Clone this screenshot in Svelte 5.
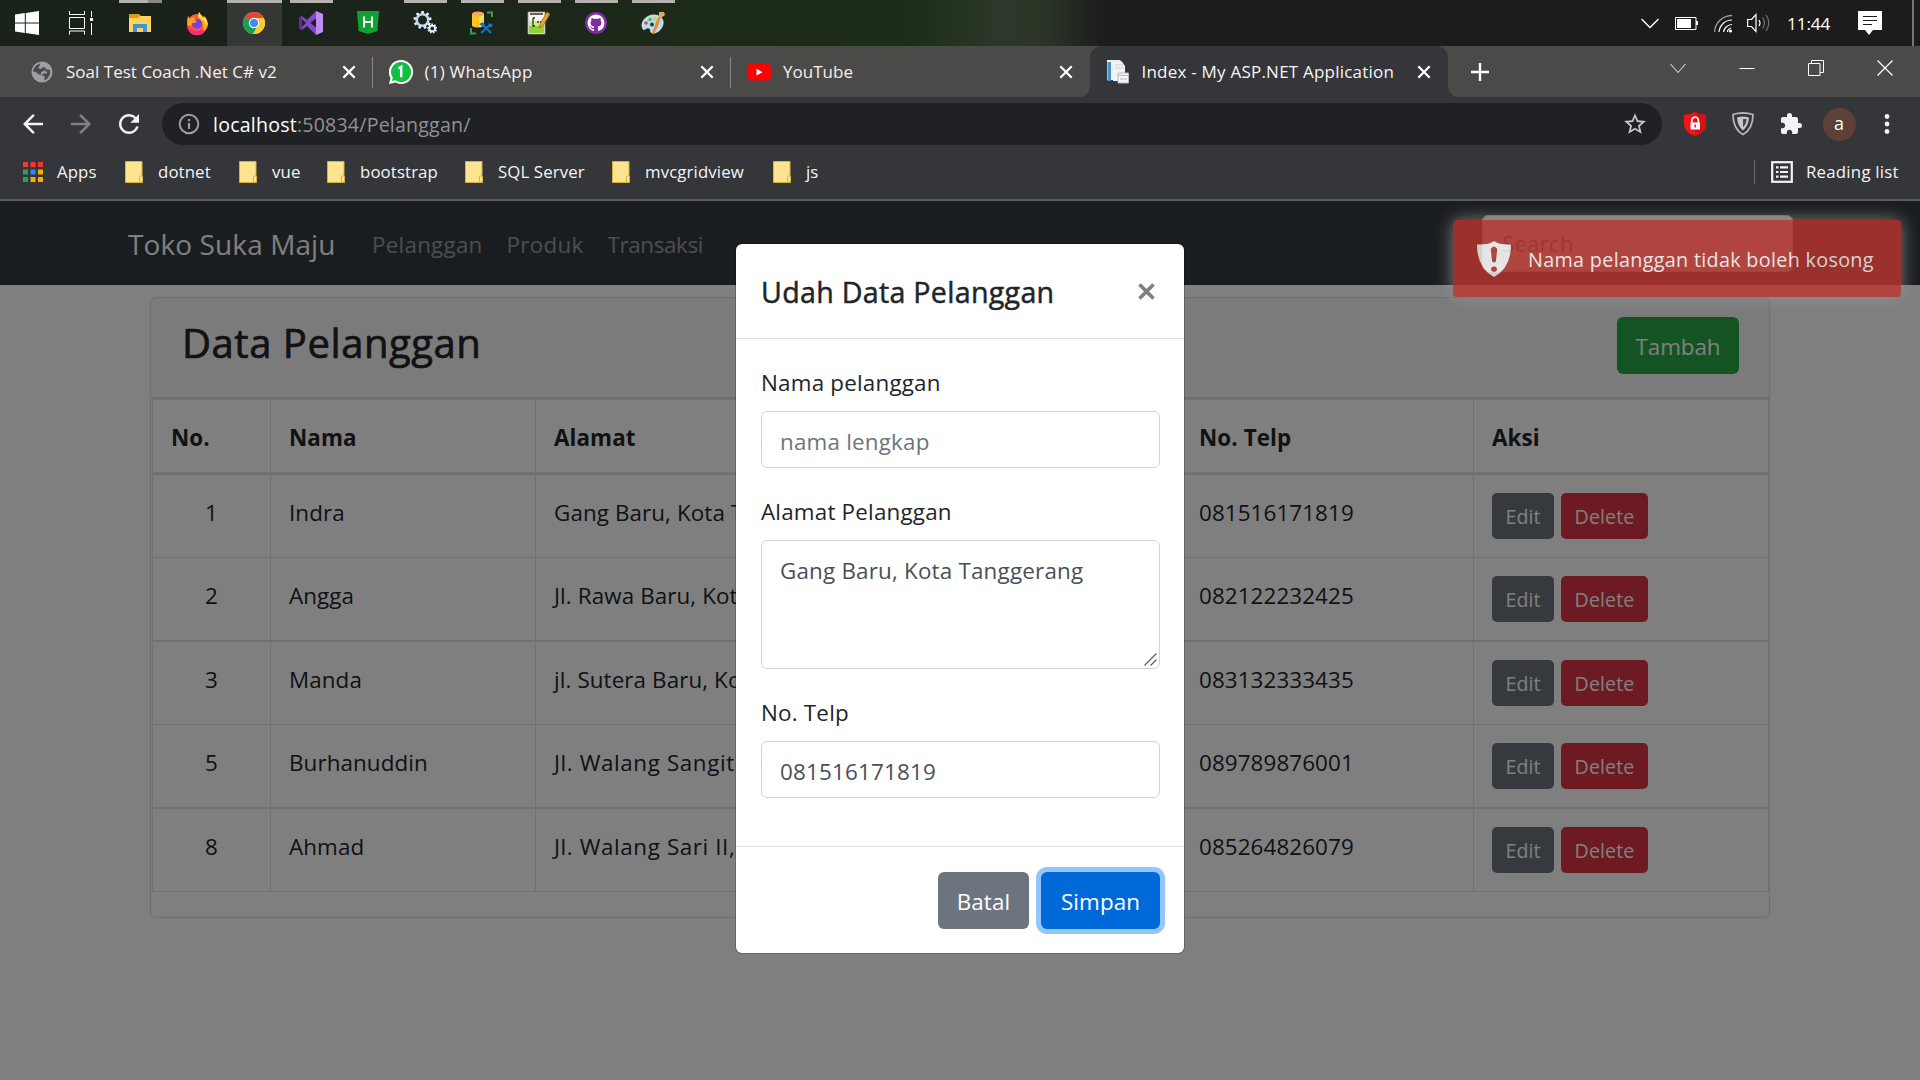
<script>
  const tabs = [
    { icon: 'globe', title: 'Soal Test Coach .Net C# v2' },
    { icon: 'whatsapp', title: '(1) WhatsApp' },
    { icon: 'youtube', title: 'YouTube' },
    { icon: 'page', title: 'Index - My ASP.NET Application', active: true }
  ];

  const bookmarks = ['dotnet', 'vue', 'bootstrap', 'SQL Server', 'mvcgridview', 'js'];

  const apps = [
    { icon: 'explorer', running: true, stacked: true },
    { icon: 'firefox' },
    { icon: 'chrome', running: true, focused: true },
    { icon: 'vs', running: true },
    { icon: 'heidi' },
    { icon: 'gears', running: true },
    { icon: 'sql', running: true },
    { icon: 'notepad', running: true },
    { icon: 'github', running: true },
    { icon: 'paint', running: true }
  ];

  const customers = [
    { id: 1, name: 'Indra', address: 'Gang Baru, Kota Tanggerang', phone: '081516171819' },
    { id: 2, name: 'Angga', address: 'Jl. Rawa Baru, Kota Tanggerang', phone: '082122232425' },
    { id: 3, name: 'Manda', address: 'jl. Sutera Baru, Kota Tanggerang', phone: '083132333435' },
    { id: 5, name: 'Burhanuddin', address: 'Jl. Walang Sangit', phone: '089789876001' },
    { id: 8, name: 'Ahmad', address: 'Jl. Walang Sari II, Jakarta', phone: '085264826079' }
  ];

  const appColors = ['#f33', '#f33', '#f33', '#2ba24c', '#2c8cf4', '#f9ab00', '#2ba24c', '#f9ab00', '#f9ab00'];
  const teeth = [0, 40, 80, 120, 160, 200, 240, 280, 320];
</script>

{#snippet taskIcon(name)}
  <svg class="task-svg" viewBox="0 0 24 24">
    {#if name === 'explorer'}
      <path d="M1 3h10l2 2v3H1z" fill="#dd9a0b" />
      <path d="M1 7h9l2-2h11v16H1z" fill="#ffd35c" />
      <path d="M5 21v-7q0-1 1-1h12q1 0 1 1v7h-4v-4h-6v4z" fill="#3a95de" />
    {:else if name === 'firefox'}
      <circle cx="12" cy="13" r="10" fill="#ff5a36" />
      <path d="M2 14a10 10 0 0 0 20 1l-4 3-6 2-6-2z" fill="#f5306f" />
      <path d="M3 5l2 3 3-2 4 3-2 4-7 2-1-5zM13 6l1-5 4 6 1-2q4 4 4 9-1 5-5 6 1-5-1-9z" fill="#ffa21f" />
      <path d="M14 1l4 6 2-1q3 4 2 9l-3-5-6-4z" fill="#ffe03d" />
      <circle cx="12" cy="13" r="5" fill="#7a3fe0" />
      <path d="M5 9l5 0 2 2-3 1-3 0z" fill="#ff9b1c" />
    {:else if name === 'chrome'}
      <circle cx="12" cy="12" r="11" fill="#fbc935" />
      <path d="M12 12L2.500 6.500A11 11 0 0 1 21.500 6.500z" fill="#dc4a3e" />
      <path d="M12 12L2.500 6.500A11 11 0 0 0 11 23l5-9z" fill="#16a05a" />
      <path d="M12 7h9.800A11 11 0 0 1 11 23l5.300-8.500z" fill="#fbc935" />
      <circle cx="12" cy="12" r="5.200" fill="#fff" />
      <circle cx="12" cy="12" r="4.100" fill="#4688f4" />
    {:else if name === 'vs'}
      <path d="M3 8.500v7l4-3.500zM0 6.500L3 5l5 4 9-9v7.500L11.500 12l5.500 4.500V24l-9-9-5 4-3-1.500z" fill="#8548c9" />
      <path d="M0 6.500L3 5v3.500l0 7V19l-3-1.500z" fill="#68299a" />
      <path d="M3 8.500v7l3.500-3.500z" fill="#1b231a" />
      <path d="M17 0l7 3v18l-7 3z" fill="#c08cf2" />
    {:else if name === 'heidi'}
      <path d="M1 0h22l-1.500 20L12 23 2.500 20z" fill="#12a035" />
      <path d="M8 5.500v11M16 5.500v11M8 11h8" stroke="#fff" stroke-width="1.900" fill="none" />
    {:else if name === 'gears'}
      {#each teeth as a}
        <rect x="8.300" y="0" width="2.600" height="4" fill="#e8f3fc" transform="rotate({a} 9.500 9)" />
        <rect x="18.300" y="12.500" width="1.700" height="3" fill="#d6e8f8" transform="rotate({a} 19.200 17.500)" />
      {/each}
      <circle cx="9.500" cy="9" r="5.800" fill="none" stroke="#bcd9f2" stroke-width="2.600" />
      <circle cx="19.200" cy="17.500" r="2.900" fill="none" stroke="#e6f1fb" stroke-width="1.800" />
    {:else if name === 'sql'}
      <path d="M2 3v12q5 3 12 0V3z" fill="#fcc61c" />
      <path d="M9 3h5v12l-5 1z" fill="#ffdb5c" />
      <ellipse cx="8" cy="3" rx="6" ry="2.500" fill="#f5a95b" />
      <path d="M17 1.500h5V6M1 17v5.500h5" fill="none" stroke="#3f9b45" stroke-width="2" />
      <path d="M11 22l10-9M12 13l9 9" stroke="#1573c8" stroke-width="2.200" />
      <path d="M9 13l4-2 2 3-2 2zM19 11l1 3 3-1-1 3h-4z" fill="#1573c8" />
    {:else if name === 'notepad'}
      <path d="M1 1h17v22H1z" fill="#f5f8ec" stroke="#999" stroke-width="0.800" />
      <path d="M2 12h15v10H2z" fill="#8fd52e" />
      <path d="M2 10h15v5H2z" fill="#c8ec86" />
      <path d="M6 7v8h2M6 7h2M10 11h2M13 11h2M3 3h13" stroke="#333" stroke-width="1.300" fill="none" />
      <path d="M12 17l1-4 7-12 3 2-7 12z" fill="#f3a52a" stroke="#83612d" stroke-width="0.700" />
    {:else if name === 'github'}
      <circle cx="12" cy="12" r="11" fill="#822ba5" />
      <g transform="translate(3.600 3.600) scale(1.050)">
        <path fill="#fff" d="M8 0C3.580 0 0 3.580 0 8c0 3.540 2.290 6.530 5.470 7.590.4.070.55-.17.55-.38 0-.19-.01-.82-.01-1.490-2.010.37-2.530-.49-2.690-.94-.09-.23-.48-.94-.82-1.130-.28-.15-.68-.52-.01-.53.63-.01 1.080.58 1.230.82.72 1.210 1.870.87 2.330.66.07-.52.28-.87.51-1.070-1.780-.2-3.640-.89-3.640-3.950 0-.87.31-1.590.82-2.150-.08-.2-.36-1.020.08-2.120 0 0 .67-.21 2.200.82.64-.18 1.320-.27 2-.27.68 0 1.360.09 2 .27 1.530-1.040 2.200-.82 2.200-.82.44 1.100.16 1.920.08 2.120.51.56.82 1.270.82 2.150 0 3.070-1.870 3.750-3.650 3.950.29.25.54.73.54 1.480 0 1.070-.01 1.930-.01 2.200 0 .21.15.46.55.38A8 8 0 0 0 16 8c0-4.420-3.580-8-8-8z" />
      </g>
    {:else if name === 'paint'}
      <path d="M1 15C1 8 7 4 13 4s10 4 9 9-5 9-10 9c-4 0-1-4-4-5s-4 3-6 1z" fill="#b5dcf2" stroke="#e5f4fc" stroke-width="0.800" />
      <circle cx="5" cy="12" r="1.800" fill="#e0483a" />
      <circle cx="9" cy="8.500" r="1.800" fill="#5cb83c" />
      <circle cx="14" cy="7.500" r="1.800" fill="#f1c62c" />
      <circle cx="11" cy="13.500" r="1.900" fill="#22384a" />
      <path d="M11 22l4-11 3-6 2 1-3 9-4 8z" fill="#ee8c2d" />
      <path d="M18 1l5 0 1 3-4 3-2-1z" fill="#d9ad79" />
    {/if}
  </svg>
{/snippet}

{#snippet favicon(name)}
  <svg class="favicon" viewBox="0 0 24 24">
    {#if name === 'globe'}
      <circle cx="12" cy="12" r="10.500" fill="#9aa0a6" />
      <path d="M10 3.500q-6 2-7 8l3 .5 2 2 3 1v-3l3-1 2-3-3-1-2 2-3-1 2-3zM15 9l5 1q1 6-4 9.500l-2 1 1-4-3-1 1-2h4v-2h-2z" fill="#4c4a48" />
    {:else if name === 'whatsapp'}
      <path d="M12 0A12 12 0 1 1 6.500 22.600L0 24l1.500-6A12 12 0 0 1 12 0z" fill="#fff" />
      <path d="M12 2A10 10 0 1 1 6.500 20.300L3 21l.8-3.400A10 10 0 0 1 12 2z" fill="#11bf43" />
      <path d="M9.500 8.500l2.700-1.700v10.500" stroke="#fff" stroke-width="2.400" fill="none" />
    {:else if name === 'youtube'}
      <rect x="0" y="4" width="24" height="16.500" rx="4" fill="#f00" />
      <path d="M9.500 8.800v6.800l6-3.400z" fill="#fff" />
    {:else}
      <path d="M1 0h13l3 3v17H1z" fill="#eceff1" />
      <path d="M1.500 2h3.500v19H1.500z" fill="#4a90c8" />
      <path d="M7 2h9l3 4v15H7z" fill="#f1f3f4" />
      <path d="M9 5h8M9 8h9" stroke="#d3d8dc" stroke-width="1.200" />
      <path d="M12 13h10.500v10H12z" fill="#f5f6f7" stroke="#b5bbc0" stroke-width="1" />
      <path d="M12 15.500h10M14 19h7" stroke="#b5bbc0" stroke-width="1" />
    {/if}
  </svg>
{/snippet}

<div class="screen">
  <header class="taskbar">
    <div class="system-cell">
      <svg class="task-svg" viewBox="0 0 24 24">
        <path d="M0 3.400L9.800 2v9.500H0zM10.800 1.900L24 0v11.500H10.800zM0 12.500h9.800V22L0 20.600zM10.800 12.500H24V24l-13.200-1.900z" fill="#fff" />
      </svg>
    </div>
    <div class="system-cell">
      <svg class="task-svg" viewBox="0 0 24 24" fill="none" stroke="#fff">
        <path d="M.5 0v3.500h15V0M.5 6.500h15v11H.5zM.5 23.500v-3.500h15v3.500M22.500 0v6M22.500 12v12" />
        <rect x="21" y="7" width="3" height="3" fill="#fff" stroke="none" />
      </svg>
    </div>
    <nav class="apps">
      {#each apps as app}
        <div class="app" class:running={app.running} class:focused={app.focused} class:stacked={app.stacked}>
          {@render taskIcon(app.icon)}
        </div>
      {/each}
    </nav>
    <div class="tray">
      <svg width="18" height="24" viewBox="0 0 18 24"><path d="M.5 8L9 16.500 17.500 8" fill="none" stroke="#fff" stroke-width="1.400" /></svg>
      <svg class="battery" width="23" height="24" viewBox="0 0 23 24">
        <path d="M.5 6.500h20.500v12H.5z" fill="none" stroke="#fff" /><path d="M2 8h14v9H2zM21 10h2v4h-2z" fill="#fff" />
      </svg>
      <svg class="wifi" width="19" height="24" viewBox="0 0 19 24" fill="none" stroke="#fff" stroke-width="1.200">
        <path d="M.6 21A17 17 0 0 1 18 4.600" stroke="#aaa" /><path d="M5 21A13 13 0 0 1 18 9M9.500 21A9 9 0 0 1 18 13.500M13.500 21q0-3 3.500-4" />
        <circle cx="16.500" cy="20" r="1.600" fill="#fff" stroke="none" />
      </svg>
      <svg class="speaker" width="23" height="24" viewBox="0 0 23 24" fill="none" stroke="#fff" stroke-width="1.200">
        <path d="M.6 8.500h3.900L9 3.500v17l-4.500-5H.6z" /><path d="M12 9q2 3 0 6" />
        <path d="M15.500 6.500q4 5.500 0 11M19 4q5.500 8 0 16" stroke="#777" />
      </svg>
      <time>11:44</time>
      <svg class="notice" width="24" height="24" viewBox="0 0 24 24">
        <path d="M0 0h24v19h-9l-4 5-4-5H0z" fill="#fff" /><path d="M5 5.500h14M5 9.500h14M5 13.500h9" stroke="#1c1c1c" stroke-width="1.200" />
      </svg>
    </div>
    <div class="show-desktop"></div>
  </header>

  <div class="tabstrip">
    {#each tabs as tab}
      <div class="tab" class:active={tab.active}>
        {@render favicon(tab.icon)}
        <span class="tab-title">{tab.title}</span>
        <svg width="14" height="14" viewBox="0 0 14 14"><path d="M1.300 1.300l11.400 11.400M12.700 1.300L1.300 12.700" stroke="#fff" stroke-width="2.300" /></svg>
      </div>
    {/each}
    <svg class="new-tab" width="18" height="18" viewBox="0 0 18 18"><path d="M9 0v18M0 9h18" stroke="#fff" stroke-width="2.400" /></svg>
    <div class="window-controls">
      <svg width="16" height="16" viewBox="0 0 16 16"><path d="M.5 4L8 12.500 15.500 4" fill="none" stroke="#d5d5d5" stroke-width="1.100" /></svg>
      <svg width="16" height="16" viewBox="0 0 16 16"><path d="M.5 8.500h15" stroke="#fff" /></svg>
      <svg width="16" height="16" viewBox="0 0 16 16"><path d="M.5 3.500h11.500v12H.5zM3.500 3.500v-3h12v12h-3.500" fill="none" stroke="#fff" /></svg>
      <svg width="16" height="16" viewBox="0 0 16 16"><path d="M.5.5l15 15M15.500.5l-15 15" stroke="#fff" stroke-width="1.200" /></svg>
    </div>
  </div>

  <div class="toolbar">
    <svg class="nav-icon" viewBox="0 0 24 24"><path fill="#f1f3f4" d="M20 11H7.830l5.590-5.590L12 4l-8 8 8 8 1.410-1.410L7.830 13H20v-2z" /></svg>
    <svg class="nav-icon" viewBox="0 0 24 24"><path fill="#808185" d="M4 11h12.170l-5.590-5.590L12 4l8 8-8 8-1.410-1.410L16.170 13H4v-2z" /></svg>
    <svg class="nav-icon" viewBox="0 0 24 24"><path fill="#f1f3f4" d="M17.650 6.350A7.958 7.958 0 0 0 12 4c-4.420 0-7.990 3.580-7.990 8s3.570 8 7.990 8c3.730 0 6.840-2.550 7.730-6h-2.080A5.990 5.990 0 0 1 12 18c-3.310 0-6-2.690-6-6s2.690-6 6-6c1.660 0 3.140.69 4.220 1.780L13 11h7V4l-2.350 2.350z" /></svg>
    <div class="omnibox">
      <svg width="22" height="22" viewBox="0 0 22 22" fill="none" stroke="#9aa0a6" stroke-width="2"><circle cx="11" cy="11" r="9.300" /><path d="M11 10v6M11 6v2.200" stroke-width="2.200" /></svg>
      <span class="url"><b>localhost</b>:50834/Pelanggan/</span>
      <svg class="star" width="26" height="26" viewBox="0 0 24 24"><path fill="#c6c8ca" d="M22 9.240l-7.190-.62L12 2 9.190 8.630 2 9.240l5.460 4.730L5.820 21 12 17.270 18.180 21l-1.630-7.030L22 9.240zM12 15.400l-3.760 2.270 1-4.280-3.320-2.880 4.380-.38L12 6.100l1.710 4.040 4.380.38-3.320 2.880 1 4.280L12 15.400z" /></svg>
    </div>
    <div class="extensions">
      <svg width="24" height="24" viewBox="0 0 24 24">
        <path d="M12 0q5 3 11 3v10q-1 8-11 11Q2 21 1 13V3q6 0 11-3z" fill="#f5131a" /><path d="M12 0q5 3 11 3v10q-1 8-11 11z" fill="#d90f12" />
        <path d="M8.800 11V8.500a3.300 3.300 0 0 1 6.600 0V11" fill="none" stroke="#fff" stroke-width="1.700" /><rect x="7.500" y="10.500" width="9.500" height="7" fill="#fff" /><path d="M12.200 12.500v3" stroke="#e01115" stroke-width="1.500" />
      </svg>
      <svg width="24" height="24" viewBox="0 0 24 24">
        <path d="M2 2.500Q12-.5 22 2.500 22 17 12 22.500 2 17 2 2.500z" fill="none" stroke="#b5b7ba" stroke-width="1.800" />
        <path d="M6 5.500q6-2 12 0Q17.500 14 12 18.500 6.500 14 6 5.500z" fill="#c5c7c9" /><path d="M12 7h3.500q0 5-3.500 8z" fill="#45464a" />
      </svg>
      <svg width="24" height="24" viewBox="0 0 24 24"><path fill="#f1f3f4" d="M20.500 11H19V7c0-1.100-.9-2-2-2h-4V3.500a2.500 2.500 0 0 0-5 0V5H4c-1.100 0-1.990.9-1.990 2v3.800H3.500c1.490 0 2.700 1.210 2.700 2.700s-1.210 2.700-2.700 2.700H2V20c0 1.100.9 2 2 2h3.800v-1.500c0-1.490 1.210-2.700 2.700-2.700s2.700 1.210 2.700 2.700V22H17c1.100 0 2-.9 2-2v-4h1.500a2.500 2.500 0 0 0 0-5z" /></svg>
      <span class="avatar">a</span>
      <svg width="24" height="24" viewBox="0 0 24 24" fill="#f1f3f4"><circle cx="12" cy="4.500" r="2.400" /><circle cx="12" cy="12" r="2.400" /><circle cx="12" cy="19.500" r="2.400" /></svg>
    </div>
  </div>

  <div class="bookmarks">
    <div class="bookmark apps-link">
      <svg width="20" height="20" viewBox="0 0 20 20">
        {#each appColors as color, i}
          <rect x={(i % 3) * 7.5} y={Math.floor(i / 3) * 7.5} width="5" height="5" fill={color} />
        {/each}
      </svg>
      Apps
    </div>
    {#each bookmarks as name}
      <div class="bookmark">
        <svg width="18" height="22" viewBox="0 0 18 22">
          <path d="M.5.5h16.500V15l.5 1v5.500H.5z" fill="#ffe38f" stroke="#d9b23c" /><path d="M14.500 21v-5.500q1.500-1.500 3 0V21z" fill="#ffe9a8" stroke="#d9b23c" />
        </svg>
        {name}
      </div>
    {/each}
    <div class="reading">
      <svg width="22" height="22" viewBox="0 0 22 22" fill="none" stroke="#f1f3f4"><rect x="1.200" y="1.200" width="19.600" height="19.600" stroke-width="2.200" /><path d="M5 6.300h2.500M5 11h2.500M5 15.700h2.500M9 6.300h8M9 11h8M9 15.700h8" stroke-width="2.200" /></svg>
      Reading list
    </div>
  </div>

  <main class="page">
    <nav class="navbar">
      <span class="brand">Toko Suka Maju</span>
      <span class="link">Pelanggan</span>
      <span class="link">Produk</span>
      <span class="link">Transaksi</span>
      <input class="search" type="text" placeholder="Search" />
    </nav>

    <section class="card">
      <div class="card-header">
        <h2>Data Pelanggan</h2>
        <button class="btn success">Tambah</button>
      </div>
      <div class="table">
        <div class="row head">
          <div>No.</div><div>Nama</div><div>Alamat</div><div>No. Telp</div><div>Aksi</div>
        </div>
        {#each customers as c}
          <div class="row">
            <div class="number">{c.id}</div>
            <div>{c.name}</div>
            <div class="address">{c.address}</div>
            <div>{c.phone}</div>
            <div class="actions">
              <button class="btn small secondary edit">Edit</button>
              <button class="btn small danger delete">Delete</button>
            </div>
          </div>
        {/each}
      </div>
    </section>

    <div class="backdrop">
      <div class="modal">
        <div class="modal-header">
          <h5>Udah Data Pelanggan</h5>
          <svg width="17" height="17" viewBox="0 0 17 17"><path d="M1.500 1.500l14 14M15.500 1.500l-14 14" stroke="#7f7f7f" stroke-width="3.700" /></svg>
        </div>
        <div class="modal-body">
          <label for="nama">Nama pelanggan</label>
          <input id="nama" class="field" type="text" placeholder="nama lengkap" />
          <label for="alamat">Alamat Pelanggan</label>
          <div class="area">
            <textarea id="alamat" class="field">Gang Baru, Kota Tanggerang</textarea>
            <svg class="grip" width="13" height="13" viewBox="0 0 13 13"><path d="M.5 12.500l12-12M6.500 12.500l6-6" stroke="#555" stroke-width="1.100" /></svg>
          </div>
          <label for="telp">No. Telp</label>
          <input id="telp" class="field" type="text" value="081516171819" />
        </div>
        <div class="modal-footer">
          <button class="btn secondary cancel">Batal</button>
          <button class="btn primary">Simpan</button>
        </div>
      </div>
    </div>

    <div class="toast">
      <svg width="34" height="36" viewBox="0 0 34 36">
        <path fill-rule="evenodd" fill="#fff" d="M17 0q5 4 17 3.500Q34 27 17 36 0 27 0 3.500 12 4 17 0zM13.800 8l1.200 12q2 3 4 0l1.200-12q-3.200-5-6.400 0zM17 25.500a3 2.600 0 1 0 .01 0z" />
      </svg>
      <span>Nama pelanggan tidak boleh kosong</span>
    </div>
  </main>
</div>

<style>
  :global(body) { margin: 0; }
  .screen, .screen * { box-sizing: border-box; }
  .screen {
    width: 1920px; height: 1080px; overflow: hidden; display: flex; flex-direction: column;
    font-family: "Open Sans", "Noto Sans", sans-serif; font-size: 22.4px; line-height: 36px; color: #212529;
  }
  svg { display: block; flex: none; }
  button, input, textarea { font: inherit; letter-spacing: inherit; word-spacing: inherit; margin: 0; }

  .taskbar {
    height: 46px; flex: none; display: flex; align-items: center; color: #fff;
    background: linear-gradient(90deg, #19221b 0, #1b231a 400px, #1c2a18 680px, #1b2c19 900px, #2c3829 1000px, #2b3527 1045px, #1c1e1c 1100px, #1c1c1c 1200px);
  }
  .task-svg { width: 24px; height: 24px; }
  .system-cell { width: 54px; display: flex; justify-content: center; }
  .apps { display: flex; gap: 2px; height: 46px; margin-left: 5px; }
  .app { width: 55px; height: 46px; display: flex; flex-direction: column; align-items: center; padding: 11px 2px 0 0; position: relative; }
  .app.running::before { content: ""; position: absolute; top: 0; left: 6px; right: 6px; height: 3px; background: #b5b1af; }
  .app.stacked::before { background: linear-gradient(90deg, #b5b1af 29px, #8b8886 29px); }
  .app.focused { background: #343733; }
  .app.focused::before { left: 0; right: 0; }
  .tray { margin-left: auto; display: flex; align-items: center; font-size: 17.2px; line-height: 24px; }
  .battery { margin-left: 16px; }
  .wifi { margin-left: 16px; }
  .speaker { margin-left: 14px; }
  time { margin-left: 17px; width: 43px; letter-spacing: -0.1px; white-space: nowrap; padding-top: 1px; }
  .notice { margin-left: 28px; }
  .show-desktop { width: 2px; height: 46px; background: #777; margin: 0 6px 0 30px; }

  .tabstrip { height: 51px; flex: none; background: #4c4a48; display: flex; align-items: center; padding-left: 14px; color: #f1f1f1; font-size: 17px; }
  .tab { width: 358.5px; height: 51px; display: flex; align-items: center; padding: 0 17px 0 16px; position: relative; }
  .tab:nth-child(-n + 2)::after { content: ""; position: absolute; right: 0; top: 11px; width: 1px; height: 31px; background: #8b8988; }
  .tab.active { background: #35363a; border-radius: 12px 12px 0 0; color: #f5f5f5; }
  .tab.active::before, .tab.active::after { content: ""; position: absolute; bottom: 0; width: 10px; height: 10px; }
  .tab.active::before { left: -10px; background: radial-gradient(circle at 0 0, transparent 9.5px, #35363a 10px); }
  .tab.active::after { right: -10px; background: radial-gradient(circle at 100% 0, transparent 9.5px, #35363a 10px); }
  .favicon { width: 24px; height: 24px; margin-right: 12px; }
  .tab-title { flex: 1; white-space: nowrap; letter-spacing: 0.02px; }
  .tab:nth-child(2) .tab-title, .active .tab-title { letter-spacing: 0.22px; }
  .new-tab { margin-left: 23px; }
  .window-controls { margin-left: auto; display: flex; gap: 53px; padding: 0 27px 8px 0; }

  .toolbar { height: 54px; flex: none; background: #35363a; display: flex; align-items: center; gap: 18px; padding-left: 18px; }
  .nav-icon { width: 30px; height: 30px; }
  .omnibox { width: 1500px; height: 42px; border-radius: 21px; background: #202124; display: flex; align-items: center; padding: 0 14px 0 16px; }
  .url { margin-left: 13px; font-size: 19.6px; letter-spacing: 0.2px; color: #8f9195; padding-top: 1px; }
  .url b { font-weight: 400; color: #fff; }
  .star { margin-left: auto; }
  .extensions { display: grid; grid-template-columns: repeat(5, 48px); justify-items: center; align-items: center; margin-left: -9px; }
  .avatar { width: 33px; height: 33px; border-radius: 50%; background: #5d4037; color: #fff; font-size: 18px; line-height: 31px; text-align: center; }

  .bookmarks {
    height: 50px; flex: none; background: #35363a; border-bottom: 2px solid #5b5c60; padding: 0 0 6px 23px;
    display: grid; grid-template-columns: 102px 114px 88px 138px 147px 161px 1fr auto; align-items: center;
    font-size: 16.8px; line-height: 24px; letter-spacing: 0.12px; color: #f4f5f6;
  }
  .bookmark { display: flex; align-items: center; gap: 15px; white-space: nowrap; }
  .apps-link { gap: 14px; }
  .reading { display: flex; align-items: center; gap: 13px; border-left: 1px solid #6b6c70; padding: 0 21px 0 16px; width: 166px; letter-spacing: 0.25px; white-space: nowrap; }

  .page { flex: 1; position: relative; background: #fff; min-height: 0; letter-spacing: 0.1px; }
  .navbar { height: 84px; background: #343a40; display: flex; align-items: center; padding: 2px 127px 0 128px; }
  .brand { color: #fff; font-size: 28px; width: 244px; white-space: nowrap; }
  .link { color: rgba(255, 255, 255, 0.5); white-space: nowrap; margin-right: 24px; padding-top: 2px; letter-spacing: 0.25px; }
  .link:nth-of-type(4) { letter-spacing: -0.35px; }
  .search { margin-left: auto; width: 311px; height: 57px; border: 1px solid #ced4da; border-radius: 6px; padding: 0 19px; margin-bottom: 2px; background: #fff; }
  .search::placeholder { color: #6c757d; }

  .card { width: 1620px; height: 621px; margin: 12px auto 0; border: 1px solid rgba(0, 0, 0, 0.125); border-radius: 6px; }
  .card-header { height: 100px; border-bottom: 1px solid rgba(0, 0, 0, 0.125); background: rgba(0, 0, 0, 0.03); display: flex; justify-content: space-between; align-items: flex-start; padding: 19px 30px 0 31px; }
  h2 { margin: 1px 0 0; font-size: 40px; line-height: 50px; font-weight: 400; letter-spacing: 0.55px; -webkit-text-stroke: 0.7px currentColor; }
  .btn { height: 57px; border: 0; border-radius: 6px; padding: 1px 0 0; color: #fff; text-align: center; }
  .success { background: #28a745; width: 122px; padding-top: 3px; letter-spacing: -0.1px; }
  .secondary { background: #6c757d; }
  .danger { background: #dc3545; }
  .table { margin-left: 1px; border-left: 1px solid #dee2e6; border-top: 2px solid #dee2e6; }
  .row { height: 83px; display: grid; grid-template-columns: 118px 265px 645px 293px 295px; border-bottom: 1px solid #dee2e6; }
  .row:nth-child(odd):not(.head) { height: 84px; border-bottom-width: 2px; }
  .row > div { border-right: 1px solid #dee2e6; padding: 20px 0 0 18px; white-space: nowrap; }
  .row.head { height: 75px; border-bottom: 3px solid #dee2e6; font-weight: 700; }
  .row:nth-child(n + 5) > .address { letter-spacing: 0.6px; }
  .row > .number { text-align: center; padding-left: 0; }
  .row > .actions { display: flex; gap: 7px; padding-top: 18px; }
  .small { height: 46px; border-radius: 5px; font-size: 19.6px; line-height: 30px; }
  .edit { width: 62px; }
  .delete { width: 87px; }

  .backdrop { position: absolute; inset: 0; background: rgba(0, 0, 0, 0.5); display: flex; justify-content: center; align-items: flex-start; padding-top: 43px; }
  .modal { width: 448px; height: 709px; background: #fff; border-radius: 6px; display: flex; flex-direction: column; box-shadow: 0 0 0 1px rgba(0, 0, 0, 0.2); }
  .modal-header { height: 95px; border-bottom: 1px solid #dee2e6; display: flex; justify-content: space-between; align-items: center; padding: 1px 29px 0 25px; }
  h5 { margin: 0; font-size: 28.6px; font-weight: 400; line-height: 40px; white-space: nowrap; letter-spacing: 0.3px; -webkit-text-stroke: 0.5px currentColor; }
  .modal-body { flex: 1; padding: 25px 24px 0 25px; display: flex; flex-direction: column; letter-spacing: 0.2px; }
  label { position: relative; top: 1px; }
  .field { width: 399px; height: 57px; border: 1px solid #ced4da; border-radius: 6px; padding: 3px 18px 0; color: #495057; background: #fff; margin: 11px 0 25px; outline: 0; display: block; }
  .field::placeholder { color: #6c757d; }
  .area { position: relative; }
  textarea.field { height: 129px; resize: none; padding: 12px 18px; overflow: hidden; }
  .grip { position: absolute; right: 3px; bottom: 28px; }
  .modal-footer { height: 107px; border-top: 1px solid #dee2e6; display: flex; justify-content: flex-end; padding: 25px 24px 0; gap: 12px; }
  .cancel { width: 91px; padding-top: 2px; }
  .primary { width: 119px; background: #0069d9; box-shadow: 0 0 0 5px #92c6ff; padding-top: 2px; }

  .toast {
    position: absolute; left: 1453px; top: 19px; width: 448px; height: 77px; opacity: 0.8; border-radius: 4px;
    background: #bd362f; box-shadow: 0 0 18px #999; color: #fff; font-size: 19.8px; line-height: 30px; letter-spacing: 0.3px;
    display: flex; align-items: flex-start; padding: 21px 0 0 24px; gap: 17px; white-space: nowrap;
  }
  .toast span { padding-top: 4px; }
</style>
